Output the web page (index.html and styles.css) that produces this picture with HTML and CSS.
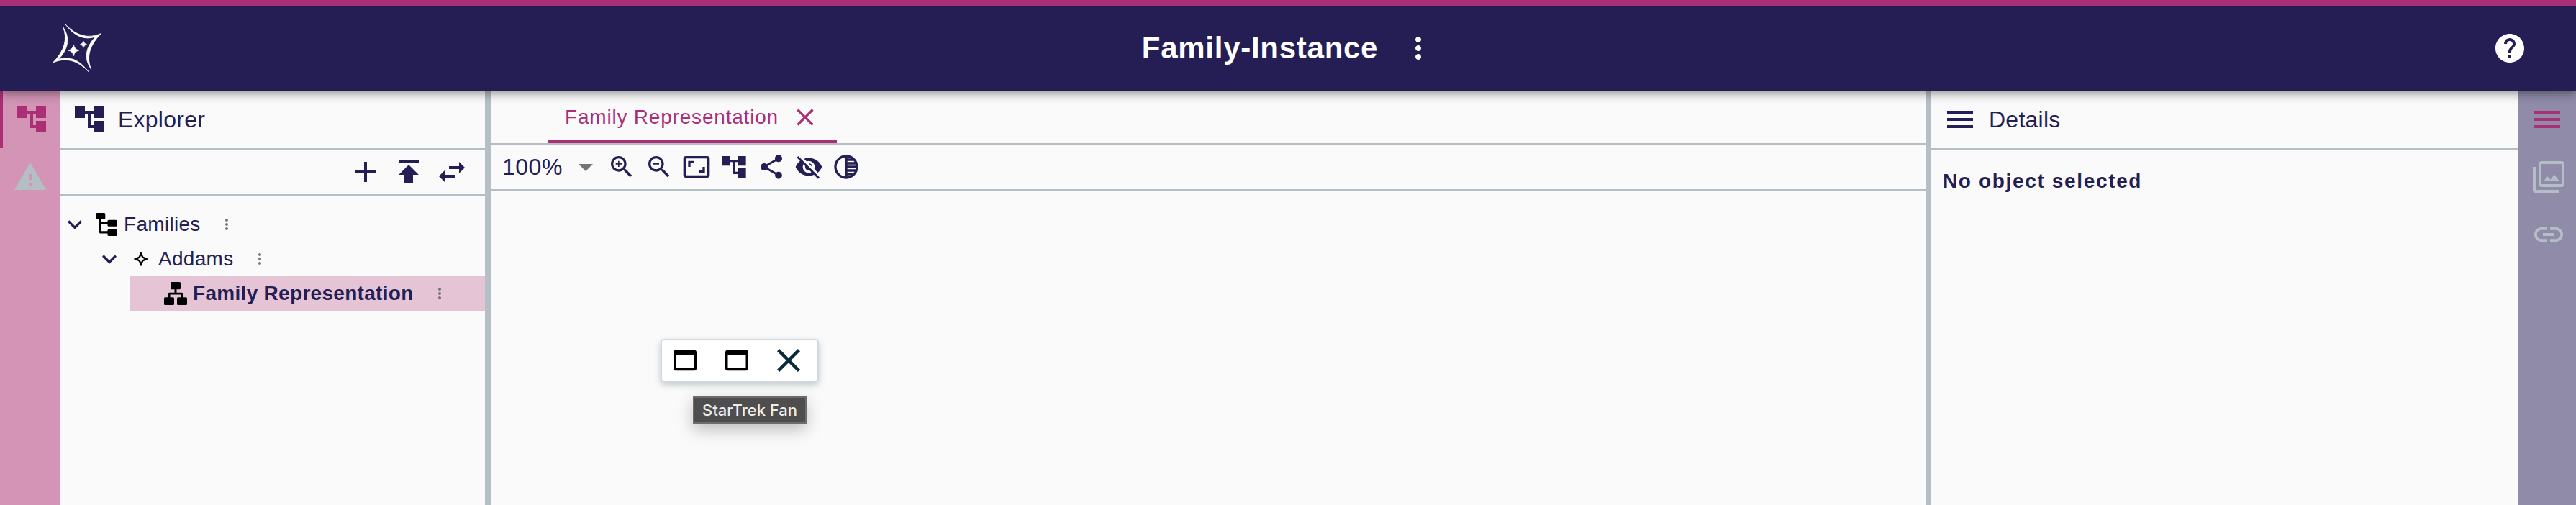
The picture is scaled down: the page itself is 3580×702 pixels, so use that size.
FILE: index.html
```
<!DOCTYPE html>
<html lang="en">
<head>
<meta charset="utf-8">
<title>Family-Instance</title>
<link rel="stylesheet" href="styles.css">
</head>
<body>
<svg class="defs" aria-hidden="true">
  <symbol id="tree" viewBox="0 0 24 24"><path d="M22 11V3h-7v3H9V3H2v8h7V8h2v10h4v3h7v-8h-7v3h-2V8h2v3z"/></symbol>
  <symbol id="menu" viewBox="0 0 24 24"><path d="M3 18h18v-2H3v2zm0-5h18v-2H3v2zm0-7v2h18V6H3z"/></symbol>
  <symbol id="more" viewBox="0 0 24 24"><path d="M12 8c1.1 0 2-.9 2-2s-.9-2-2-2-2 .9-2 2 .9 2 2 2zm0 2c-1.1 0-2 .9-2 2s.9 2 2 2 2-.9 2-2-.9-2-2-2zm0 6c-1.1 0-2 .9-2 2s.9 2 2 2 2-.9 2-2-.9-2-2-2z"/></symbol>
  <symbol id="chevron" viewBox="0 0 24 24"><path d="M16.59 8.59L12 13.17 7.41 8.59 6 10l6 6 6-6z"/></symbol>
  <symbol id="close" viewBox="0 0 24 24"><path d="M19 6.41L17.59 5 12 10.59 6.41 5 5 6.41 10.59 12 5 17.59 6.41 19 12 13.41 17.59 19 19 17.59 13.41 12z"/></symbol>
  <symbol id="window" viewBox="0 0 32 32"><path fill-rule="evenodd" d="M3 1.7h26a3 3 0 0 1 3 3v22.500a3 3 0 0 1-3 3H3a3 3 0 0 1-3-3V4.700a3 3 0 0 1 3-3zM3.500 9v18h25V9z"/></symbol>
</svg>

<header class="navbar">
  <svg class="logo" viewBox="70 30 74 74">
    <g id="arm"><path d="M91 34Q114.300 58.400 140.500 46.500Q116 71.500 126.700 96.500Q111 74 132.700 51Q110 59 91 34z"/></g>
    <use href="#arm" transform="rotate(180 107 66.800)"/>
    <path d="M102.300 62.300Q103.500 68.800 109.800 70Q103.500 71.200 102.300 77.700Q101.100 71.200 94.800 70Q101.100 68.800 102.300 62.300zM116 57.200Q116.900 60.800 120.500 61.700Q116.900 62.600 116 66.200Q115.100 62.600 111.500 61.700Q115.100 60.800 116 57.200z"/>
  </svg>
  <div class="title"><span>Family-Instance</span><svg class="i48"><use href="#more"/></svg></div>
  <svg class="i48" viewBox="0 0 24 24"><path d="M12 2C6.480 2 2 6.480 2 12s4.480 10 10 10 10-4.480 10-10S17.520 2 12 2zm1 17h-2v-2h2v2zm2.070-7.750l-.9.920C13.450 12.900 13 13.500 13 15h-2v-.5c0-1.100.45-2.100 1.170-2.830l1.240-1.260c.37-.36.59-.86.59-1.410 0-1.100-.9-2-2-2s-2 .9-2 2H8c0-2.210 1.790-4 4-4s4 1.790 4 4c0 .88-.36 1.680-.93 2.250z"/></svg>
</header>

<main class="workbench">
  <nav class="rail rail-left">
    <div class="slot active"><svg class="i48"><use href="#tree"/></svg></div>
    <div class="slot"><svg class="i48" viewBox="0 0 24 24"><path d="M1 21h22L12 2 1 21zm12-3h-2v-2h2v2zm0-4h-2v-4h2v4z"/></svg></div>
  </nav>

  <section class="explorer">
    <div class="panel-head"><svg class="i48"><use href="#tree"/></svg><span>Explorer</span></div>
    <div class="explorer-tools">
      <svg class="i48" viewBox="0 0 24 24"><path d="M19 13h-6v6h-2v-6H5v-2h6V5h2v6h6v2z"/></svg>
      <svg class="i48" viewBox="0 0 24 24"><path d="M5 4v2h14V4H5zm0 10h4v6h6v-6h4l-7-7-7 7z"/></svg>
      <svg class="i48" viewBox="0 0 24 24"><path d="M6.990 11L3 15l3.990 4v-3H14v-2H6.990v-3zM21 9l-3.990-4v3H10v2h7.010v3L21 9z"/></svg>
    </div>
    <div class="tree">
      <div class="row">
        <svg class="i40"><use href="#chevron"/></svg>
        <svg class="kind" viewBox="0 0 32 32"><rect x="1.300" width="13" height="9" rx="1.500"/><rect x="17.500" y="9.700" width="13" height="9" rx="1.500"/><rect x="17.500" y="22.800" width="13" height="9.200" rx="1.500"/><path d="M6 8h3v5h9v3H9v9.300h9v3.200H7.500A1.500 1.500 0 0 1 6 27z"/></svg>
        <span>Families</span><svg class="dots"><use href="#more"/></svg>
      </div>
      <div class="row level1">
        <svg class="i40"><use href="#chevron"/></svg>
        <svg class="kind" viewBox="0 0 32 32"><path fill-rule="evenodd" d="M16 5.500l3.200 7.300 7.300 3.200-7.300 3.200L16 26.500l-3.200-7.300L5.500 16l7.300-3.200zM16 11.500l-1.400 3.100-3.100 1.400 3.100 1.400L16 20.500l1.400-3.100 3.100-1.400-3.100-1.400z"/></svg>
        <span>Addams</span><svg class="dots"><use href="#more"/></svg>
      </div>
      <div class="row level2">
        <svg class="kind" viewBox="0 0 32 32"><rect x="9" width="14" height="10.300" rx="1.500"/><rect y="21.300" width="14" height="10.700" rx="1.500"/><rect x="18" y="21.300" width="14" height="10.700" rx="1.500"/><path d="M14.500 9h3v5.700h7A2.300 2.300 0 0 1 26.800 17v5h-3.300v-4.500h-15V22H5.200v-5a2.300 2.300 0 0 1 2.300-2.300h7z"/></svg>
        <span>Family Representation</span><svg class="dots"><use href="#more"/></svg>
      </div>
    </div>
  </section>

  <div class="splitter"></div>

  <section class="editor">
    <div class="tabs"><div class="tab"><span>Family Representation</span><svg class="i40"><use href="#close"/></svg></div></div>
    <div class="diagram-tools">
      <span class="zoom">100%</span>
      <svg class="i48 caret" viewBox="0 0 24 24"><path d="M7 10l5 5 5-5z"/></svg>
      <svg class="i40" viewBox="0 0 24 24"><path d="M15.500 14h-.79l-.28-.27C15.410 12.590 16 11.110 16 9.500 16 5.910 13.090 3 9.500 3S3 5.910 3 9.500 5.910 16 9.500 16c1.610 0 3.090-.59 4.230-1.570l.27.28v.79l5 4.990L20.490 19l-4.990-5zm-6 0C7.010 14 5 11.990 5 9.500S7.010 5 9.500 5 14 7.010 14 9.500 11.990 14 9.500 14zm2.500-4h-2v2H9v-2H7V9h2V7h1v2h2v1z"/></svg>
      <svg class="i40" viewBox="0 0 24 24"><path d="M15.500 14h-.79l-.28-.27C15.410 12.590 16 11.110 16 9.500 16 5.910 13.090 3 9.500 3S3 5.910 3 9.500 5.910 16 9.500 16c1.610 0 3.090-.59 4.230-1.570l.27.28v.79l5 4.990L20.490 19l-4.990-5zm-6 0C7.010 14 5 11.990 5 9.500S7.010 5 9.500 5 14 7.010 14 9.500 11.990 14 9.500 14zM7 9h5v1H7z"/></svg>
      <svg class="i40" viewBox="0 0 24 24"><path d="M19 12h-2v3h-3v2h5v-5zM7 9h3V7H5v5h2V9zm14-6H3c-1.100 0-2 .9-2 2v14c0 1.100.9 2 2 2h18c1.100 0 2-.9 2-2V5c0-1.100-.9-2-2-2zm0 16.010H3V4.990h18v14.020z"/></svg>
      <svg class="i40"><use href="#tree"/></svg>
      <svg class="i40" viewBox="0 0 24 24"><path d="M18 16.080c-.76 0-1.440.3-1.960.77L8.910 12.700c.05-.23.09-.46.09-.7s-.04-.47-.09-.7l7.050-4.110c.54.5 1.250.81 2.040.81 1.660 0 3-1.340 3-3s-1.340-3-3-3-3 1.340-3 3c0 .24.040.47.090.7L8.040 9.810C7.500 9.310 6.790 9 6 9c-1.660 0-3 1.340-3 3s1.340 3 3 3c.79 0 1.500-.31 2.040-.81l7.120 4.160c-.05.21-.08.43-.08.65 0 1.610 1.310 2.920 2.920 2.920s2.920-1.310 2.920-2.920-1.310-2.920-2.920-2.920z"/></svg>
      <svg class="i40" viewBox="0 0 24 24"><path d="M12 7c2.760 0 5 2.240 5 5 0 .65-.13 1.260-.36 1.830l2.920 2.920c1.510-1.260 2.700-2.890 3.430-4.750-1.730-4.390-6-7.500-11-7.500-1.400 0-2.740.25-3.980.7l2.160 2.160C10.740 7.130 11.350 7 12 7zM2 4.270l2.280 2.280.46.46C3.080 8.300 1.780 10.020 1 12c1.730 4.390 6 7.500 11 7.500 1.550 0 3.030-.3 4.380-.84l.42.42L19.730 22 21 20.730 3.270 3 2 4.270zM7.530 9.800l1.550 1.550c-.05.21-.08.43-.08.65 0 1.660 1.340 3 3 3 .22 0 .44-.03.65-.08l1.550 1.550c-.67.33-1.410.53-2.200.53-2.760 0-5-2.240-5-5 0-.79.2-1.530.53-2.200zm4.310-.78l3.150 3.150.02-.16c0-1.660-1.340-3-3-3l-.17.010z"/></svg>
      <svg class="i40" viewBox="0 0 24 24"><path d="M12 2C6.480 2 2 6.480 2 12s4.480 10 10 10 10-4.480 10-10S17.520 2 12 2zm-1 17.930c-3.940-.49-7-3.850-7-7.930s3.050-7.440 7-7.930v15.860zm2-15.860c1.030.13 2 .45 2.870.93H13v-.93zM13 7h5.240c.25.31.48.65.68 1H13V7zm0 3h6.740c.08.33.15.66.19 1H13v-1zm0 9.930V19h2.870c-.87.48-1.840.8-2.870.93zM18.240 17H13v-1h5.920c-.2.35-.43.69-.68 1zm1.500-3H13v-1h6.930c-.04.34-.11.67-.19 1z"/></svg>
    </div>
    <div class="canvas">
      <div class="palette">
        <svg class="tool"><use href="#window"/></svg>
        <svg class="tool"><use href="#window"/></svg>
        <svg class="tool cross" viewBox="5 5 14 14"><path d="M19 6.410L17.590 5 12 10.590 6.410 5 5 6.410 10.590 12 5 17.590 6.410 19 12 13.410 17.590 19 19 17.590 13.410 12z"/></svg>
      </div>
      <div class="tooltip">StarTrek Fan</div>
    </div>
  </section>

  <div class="splitter"></div>

  <section class="details">
    <div class="panel-head"><svg class="i48"><use href="#menu"/></svg><span>Details</span></div>
    <p class="empty">No object selected</p>
  </section>

  <nav class="rail rail-right">
    <div class="slot active"><svg class="i48"><use href="#menu"/></svg></div>
    <div class="slot"><svg class="i48" viewBox="0 0 24 24"><path d="M15.960 10.290l-2.750 3.540-1.960-2.360L8.500 15h11l-3.540-4.710zM3 5H1v16c0 1.100.9 2 2 2h16v-2H3V5zm18-4H7c-1.100 0-2 .9-2 2v14c0 1.100.9 2 2 2h14c1.100 0 2-.9 2-2V3c0-1.100-.9-2-2-2zm0 16H7V3h14v14z"/></svg></div>
    <div class="slot"><svg class="i48" viewBox="0 0 24 24"><path d="M3.900 12c0-1.710 1.390-3.100 3.100-3.100h4V7H7c-2.760 0-5 2.240-5 5s2.240 5 5 5h4v-1.900H7c-1.710 0-3.100-1.390-3.100-3.100zM8 13h8v-2H8v2zm9-6h-4v1.900h4c1.710 0 3.100 1.390 3.100 3.100s-1.390 3.100-3.100 3.100h-4V17h4c2.760 0 5-2.240 5-5s-2.240-5-5-5z"/></svg></div>
  </nav>
</main>
</body>
</html>
```

FILE: styles.css
```
:root {
  --navy: #241e54;
  --pink: #ab2f75;
  --line: #b3bfc5;
}
* { box-sizing: border-box; }
body {
  margin: 0;
  width: 3580px;
  height: 702px;
  overflow: hidden;
  display: flex;
  flex-direction: column;
  background: #fafafa;
  color: var(--navy);
  font-family: "Liberation Sans", Arial, sans-serif;
}
svg { display: block; flex: none; fill: currentColor; }
.defs { display: none; }
.i48 { width: 48px; height: 48px; }
.i40 { width: 40px; height: 40px; }

.navbar {
  position: relative;
  z-index: 2;
  flex: none;
  height: 126px;
  padding: 0 68px 0 70px;
  display: grid;
  grid-template-columns: 1fr auto 1fr;
  align-items: center;
  border-top: 8px solid var(--pink);
  background: var(--navy);
  color: #fff;
  box-shadow: 0 4px 8px -2px rgba(0,0,0,.2), 0 8px 10px rgba(0,0,0,.14), 0 2px 20px rgba(0,0,0,.12);
}
.navbar > :last-child { justify-self: end; }
.logo { width: 74px; height: 74px; stroke: #fff; stroke-width: .8; }
.title {
  display: flex;
  align-items: center;
  gap: 32px;
  font-size: 42px;
  font-weight: 700;
  letter-spacing: .73px;
}

.workbench { flex: 1; display: flex; min-height: 0; }
.rail { flex: none; overflow: hidden; color: var(--line); }
.rail-left { width: 84px; background: #d394b6; }
.rail-right { width: 80px; background: #8f8ba8; }
.slot {
  width: 84px;
  height: 80px;
  display: flex;
  align-items: center;
  justify-content: center;
}
.slot.active { color: var(--pink); }
.rail-left .active { border-left: 4px solid var(--pink); }
.rail-right .active { width: 80px; }

.explorer { width: 590px; flex: none; }
.splitter { width: 8px; flex: none; background: #b5bfc6; }
.panel-head {
  height: 82px;
  padding: 0 16px;
  display: flex;
  align-items: center;
  gap: 16px;
  border-bottom: 2px solid var(--line);
  font-size: 32px;
  letter-spacing: .24px;
}
.explorer-tools {
  height: 64px;
  padding-right: 22px;
  display: flex;
  align-items: center;
  justify-content: flex-end;
  gap: 12px;
  border-bottom: 2px solid var(--line);
}
.tree { padding-top: 16px; font-size: 28px; letter-spacing: .3px; }
.row { height: 48px; display: flex; align-items: center; white-space: nowrap; }
.row .kind { width: 32px; height: 32px; margin: 0 8px; color: #000; }
.row .dots { width: 24px; height: 24px; margin-left: 24px; color: #757575; }
.level1 { margin-left: 48px; }
.level2 { margin-left: 96px; padding-left: 40px; background: #e5c4d6; font-weight: 700; }

.editor { flex: 1; display: flex; flex-direction: column; min-width: 0; }
.tabs { height: 75px; padding-left: 80px; display: flex; border-bottom: 2px solid var(--line); }
.tab {
  width: 401px;
  padding: 4px 24px 0 23px;
  display: flex;
  align-items: center;
  justify-content: space-between;
  border-bottom: 4px solid var(--pink);
  color: var(--pink);
  font-size: 28px;
  letter-spacing: .8px;
  white-space: nowrap;
}
.diagram-tools {
  height: 64px;
  padding-left: 16px;
  display: flex;
  align-items: center;
  gap: 12px;
  border-bottom: 2px solid var(--line);
}
.zoom { width: 80px; font-size: 32px; letter-spacing: .5px; }
.caret { color: #757575; margin-right: -6px; }
.canvas { position: relative; flex: 1; }
.palette {
  position: absolute;
  left: 236px;
  top: 206px;
  width: 220px;
  height: 60px;
  padding-left: 16px;
  display: flex;
  align-items: center;
  gap: 40px;
  border: 2px solid #d1dade;
  border-radius: 5px;
  background: #fff;
  box-shadow: 0 4px 10px rgba(38,70,86,.28);
}
.tool { width: 32px; height: 32px; color: #000; }
.cross { color: #0b2a3d; }
.tooltip {
  position: absolute;
  left: 281px;
  top: 286px;
  width: 158px;
  height: 38px;
  border: 2px solid #6c6c6c;
  background: #4e4e4e;
  color: #ececec;
  font: 500 22px/34px Inter, sans-serif;
  text-align: center;
  white-space: nowrap;
  box-shadow: 0 8px 22px rgba(0,0,0,.25);
}

.details { width: 816px; flex: none; }
.empty { margin: 27px 0 0 16px; font-size: 28px; line-height: 34px; font-weight: 700; letter-spacing: 1.65px; }
```
